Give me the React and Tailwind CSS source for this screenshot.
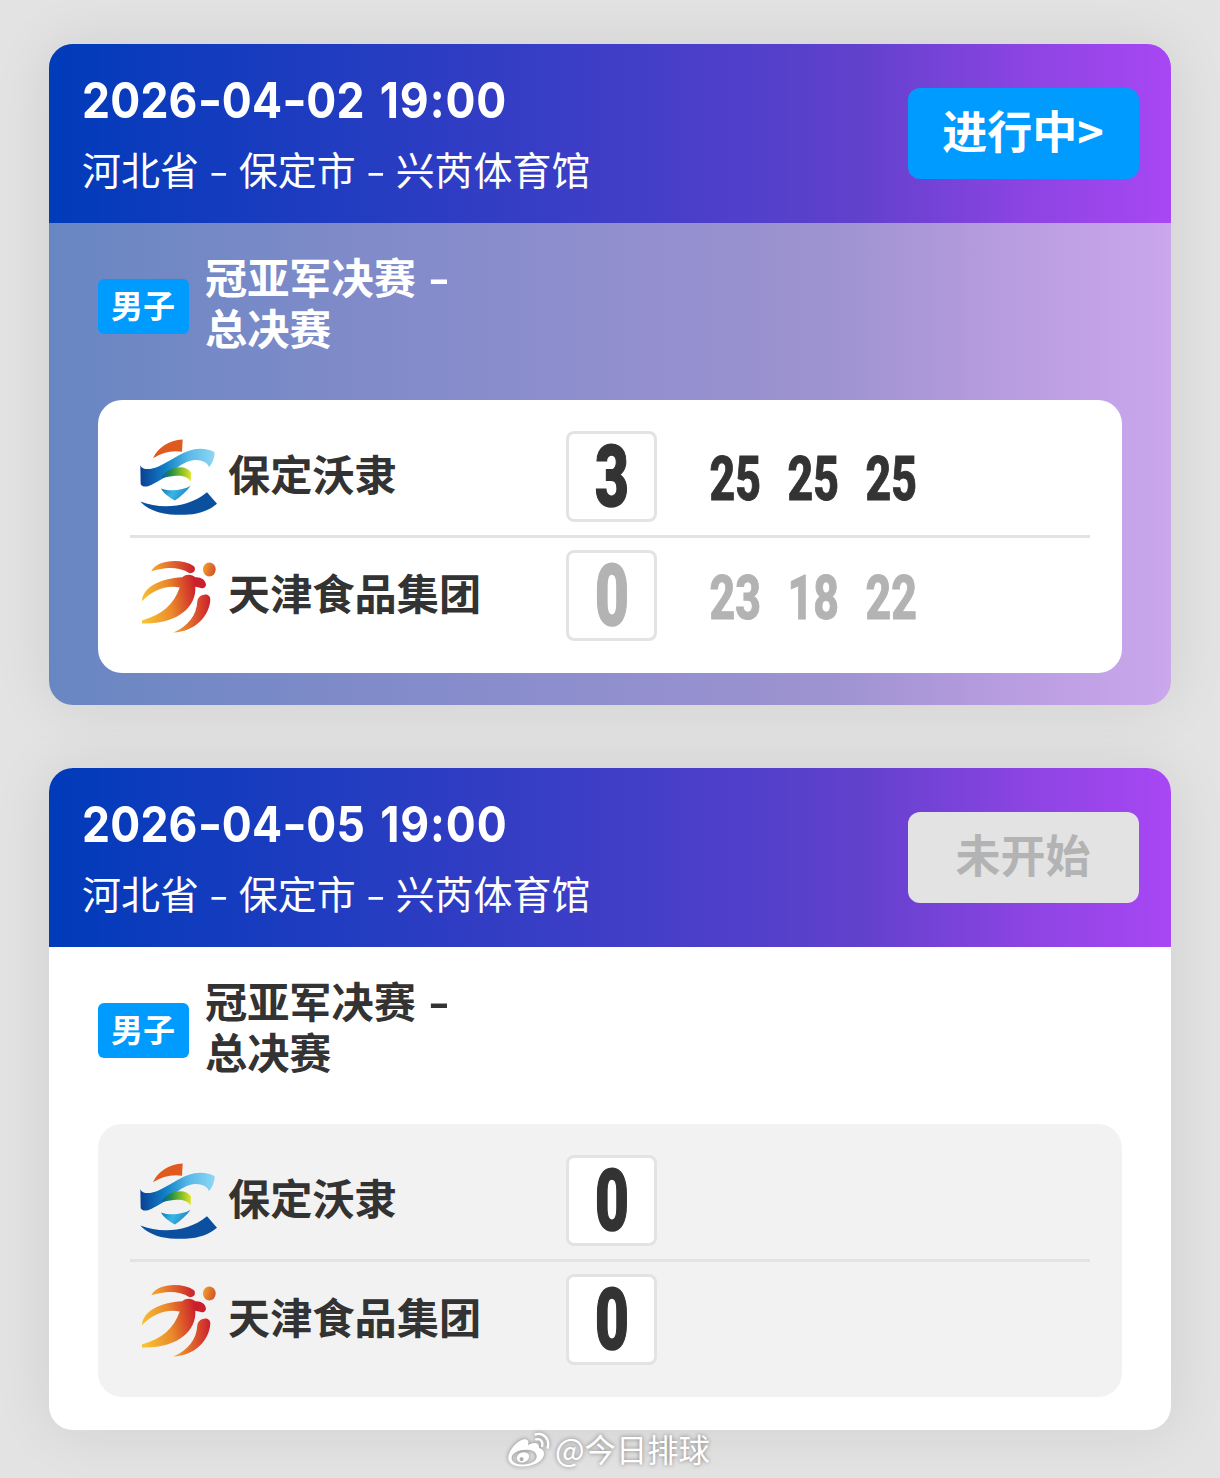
import React from 'react';

const matches = [
  {
    id: 1,
    time: ['2026', '04', '02', '19', '00'],
    live: true,
    status: '进行中',
    teams: [
      { name: '保定沃隶', logo: 'baoding', score: 3, sets: [25, 25, 25], won: true },
      { name: '天津食品集团', logo: 'tianjin', score: 0, sets: [23, 18, 22], won: false },
    ],
  },
  {
    id: 2,
    time: ['2026', '04', '05', '19', '00'],
    live: false,
    status: '未开始',
    teams: [
      { name: '保定沃隶', logo: 'baoding', score: 0, sets: [], won: true },
      { name: '天津食品集团', logo: 'tianjin', score: 0, sets: [], won: true },
    ],
  },
];

const BaodingLogo = () => (
  <svg viewBox="13 7.5 240 240" className="size-20 shrink-0">
    <defs>
      <linearGradient id="bdRibbon" x1="0" x2="1">
        <stop offset="0" stopColor="#0a3f94" />
        <stop offset="0.35" stopColor="#1282c8" />
        <stop offset="0.65" stopColor="#58b9e8" />
        <stop offset="1" stopColor="#8fd6f4" />
      </linearGradient>
      <linearGradient id="bdGreen" x1="0" x2="1">
        <stop offset="0" stopColor="#0c5cae" />
        <stop offset="0.3" stopColor="#1f8a4c" />
        <stop offset="0.6" stopColor="#6fb52c" />
        <stop offset="1" stopColor="#e3e32a" />
      </linearGradient>
      <linearGradient id="bdTip" x1="0" x2="1" y2="0.3">
        <stop offset="0" stopColor="#0d6cb8" />
        <stop offset="0.5" stopColor="#3ab5e4" />
        <stop offset="1" stopColor="#1b86c8" />
      </linearGradient>
    </defs>
    <path d="M58 71 C72 40 105 17 147 15 L145 52 C115 47 86 54 58 71Z" fill="#e0591f" />
    <path d="M20 92 C26 108 52 106 76 95 C120 76 150 44 200 43 C218 43 232 47 243 53 C243 70 236 86 226 98 C222 84 202 74 178 77 C138 82 104 128 62 146 C42 158 28 160 21 149Z" fill="url(#bdRibbon)" />
    <path d="M84 128 C106 92 160 90 172 115 L171 140 C158 121 126 119 84 132Z" fill="url(#bdGreen)" />
    <path d="M82 162 C108 172 148 168 171 154 C160 170 142 186 124 198 C114 192 92 180 82 162Z" fill="url(#bdTip)" />
    <path d="M20 201 C80 224 160 222 220 173 L250 208 C210 242 160 243 110 240 C70 236 38 222 20 201Z" fill="#0b4f9f" />
  </svg>
);

const TianjinLogo = () => (
  <svg viewBox="12 4.5 240 240" className="size-20 shrink-0">
    <defs>
      <linearGradient id="tjBody" gradientUnits="userSpaceOnUse" x1="24" y1="150" x2="190" y2="120">
        <stop offset="0" stopColor="#f8c132" />
        <stop offset="0.5" stopColor="#ea8a2a" />
        <stop offset="1" stopColor="#cb1f2b" />
      </linearGradient>
      <linearGradient id="tjPart" x1="0" x2="1">
        <stop offset="0" stopColor="#f4ab30" />
        <stop offset="1" stopColor="#cb1f2b" />
      </linearGradient>
      <linearGradient id="tjHead" x1="0" x2="1" y2="0.3">
        <stop offset="0" stopColor="#f2a52e" />
        <stop offset="1" stopColor="#d4572a" />
      </linearGradient>
    </defs>
    <path d="M52 50 C68 16 142 10 180 35 C187 45 180 57 167 56 C132 34 90 38 52 50Z" fill="url(#tjPart)" />
    <path d="M24 140 C26 98 78 72 145 68 C158 57 174 60 184 68 C202 67 214 76 216 90 C215 100 208 104 198 100 L184 97 C188 156 132 210 24 207 L24 198 C84 180 120 150 137 99 C96 90 54 108 24 140Z" fill="url(#tjBody)" />
    <path d="M190 140 C192 120 228 110 229 135 C226 188 180 232 118 234 C162 215 188 182 190 140Z" fill="url(#tjPart)" />
    <ellipse cx="226" cy="45" rx="19" ry="21" fill="url(#tjHead)" />
  </svg>
);

const WeiboIcon = () => (
  <svg viewBox="50 60 130 108" className="h-9 w-[43px] drop-shadow-[0_0_2px_rgba(0,0,0,0.4)]">
    <path fillRule="evenodd" fill="#fff" d="M54 138 C54 112 88 78 108 82 C116 84 116 92 113 99 C130 90 148 90 147 108 C166 112 166 132 152 146 C128 170 54 172 54 138Z M64 138 C64 158 98 162 122 154 C146 145 146 120 120 114 C94 110 64 120 64 138Z" />
    <path fillRule="evenodd" fill="#fff" d="M80 138 C80 124 100 116 112 124 C124 134 112 152 96 152 C86 152 80 146 80 138Z M88 142 A6 6 0 1 0 100 142 A6 6 0 1 0 88 142Z" />
    <path d="M138 82 C150 78 160 88 156 102 M136 67 C160 60 180 80 173 107" fill="none" stroke="#fff" strokeWidth="7" strokeLinecap="round" />
  </svg>
);

const logos = { baoding: BaodingLogo, tianjin: TianjinLogo };

const DateDash = () => (
  <span className="inline-block w-[27px] text-center"><span className="inline-block scale-x-[1.2]">-</span></span>
);

const PlaceDash = () => (
  <span className="inline-block w-[40px] text-center"><span className="inline-block scale-x-[1.45]">-</span></span>
);

const TeamRow = ({ team, className }) => {
  const Logo = logos[team.logo];
  const tone = team.won ? 'text-[#333]' : 'text-[#b3b3b3]';
  return (
    <div className={`flex items-center pl-2 ${className}`}>
      <Logo />
      <span className="-mt-[8px] ml-[10px] w-[338px] text-[42.2px] font-bold whitespace-nowrap text-[#333]">{team.name}</span>
      <div className="flex size-[91px] items-center justify-center rounded-lg border-3 border-[#e3e3e3] bg-white">
        <span className={`mt-px scale-x-[0.68] font-[Roboto] text-[86px] leading-none font-black [-webkit-text-stroke:1.5px_currentColor] ${tone}`}>{team.score}</span>
      </div>
      <div className={`mt-[5px] ml-[39px] flex font-[Roboto] text-[61px] leading-none font-extrabold [-webkit-text-stroke:1px_currentColor] ${tone}`}>
        {team.sets.map((points, i) => (
          <span key={i} className="flex w-[78px] justify-center"><span className="scale-x-[0.73]">{points}</span></span>
        ))}
      </div>
    </div>
  );
};

const MatchCard = ({ match }) => {
  const [year, month, day, hour, minute] = match.time;
  return (
    <section className={`overflow-hidden rounded-3xl shadow-[0_0_60px_rgba(0,0,0,0.09)] ${match.live ? 'h-[661px] bg-[linear-gradient(90deg,#6887c2_0%,#828bca_30%,#9490cf_55%,#9e93d0_70%,#b99de1_86%,#cba7ec_100%)]' : 'h-[662px] bg-white'}`}>
      <header className="flex h-[179px] items-start justify-between bg-[linear-gradient(90deg,#003bba_0%,#203cc0_25%,#433ec8_53%,#6041cc_72%,#8c44e2_87%,#a847f4_100%)] pr-8 pl-[33px] text-white">
        <div>
          <h2 className="mt-[26px] w-[500px] origin-left scale-x-[0.89] font-[Inter] text-[50px] leading-[60px] font-bold tracking-[0.2px] whitespace-nowrap">
            {year}<DateDash />{month}<DateDash />{day} <span className="ml-[5px] tracking-[1px]">{hour}:{minute}</span>
          </h2>
          <p className="mt-[10px] text-[38.95px] leading-[56px] whitespace-nowrap">
            河北省<PlaceDash />保定市<PlaceDash />兴芮体育馆
          </p>
        </div>
        <button className={`mt-11 flex h-[91px] w-[231px] justify-center rounded-xl pt-[9px] pr-px text-[45px] leading-[66px] font-bold ${match.live ? 'bg-[#009bff] text-white' : 'bg-[#e3e3e3] text-[#b3b3b3]'}`}>
          {match.status}{match.live && '>'}
        </button>
      </header>
      <div className="px-[49px]">
        <div className="flex h-[177px] items-start">
          <span className="mt-14 flex h-[55px] w-[91px] items-center justify-center rounded-md bg-[#009bff] pr-px pb-[6px] text-[32px] font-bold text-white">男子</span>
          <h3 className={`mt-[27px] ml-4 text-[42.2px] leading-[51px] font-bold ${match.live ? 'text-white' : 'text-[#333]'}`}>
            冠亚军决赛<span className="ml-3 inline-block origin-left scale-x-[1.4]">-</span><br />总决赛
          </h3>
        </div>
        <div className={`h-[273px] rounded-3xl px-8 pt-[18px] ${match.live ? 'bg-white' : 'bg-[#f2f2f2]'}`}>
          <TeamRow team={match.teams[0]} className="h-[117px]" />
          <div className="h-[3px] bg-[#e3e3e3]" />
          <TeamRow team={match.teams[1]} className="h-[115px]" />
        </div>
      </div>
    </section>
  );
};

export default function App() {
  return (
    <main className="relative h-[1478px] overflow-hidden bg-[#e3e3e3] px-[49px] pt-11 font-['Noto_Sans_CJK_SC',sans-serif]">
      <div className="flex flex-col gap-[63px]">
        {matches.map((match) => <MatchCard key={match.id} match={match} />)}
      </div>
      <div className="absolute top-[1429px] left-[507px] flex items-center text-[31.3px] leading-[42px] whitespace-nowrap text-white [text-shadow:0_0_4px_rgba(0,0,0,0.45)]">
        <WeiboIcon />
        <span className="-mt-[1px] ml-[5px]">@今日排球</span>
      </div>
    </main>
  );
}
